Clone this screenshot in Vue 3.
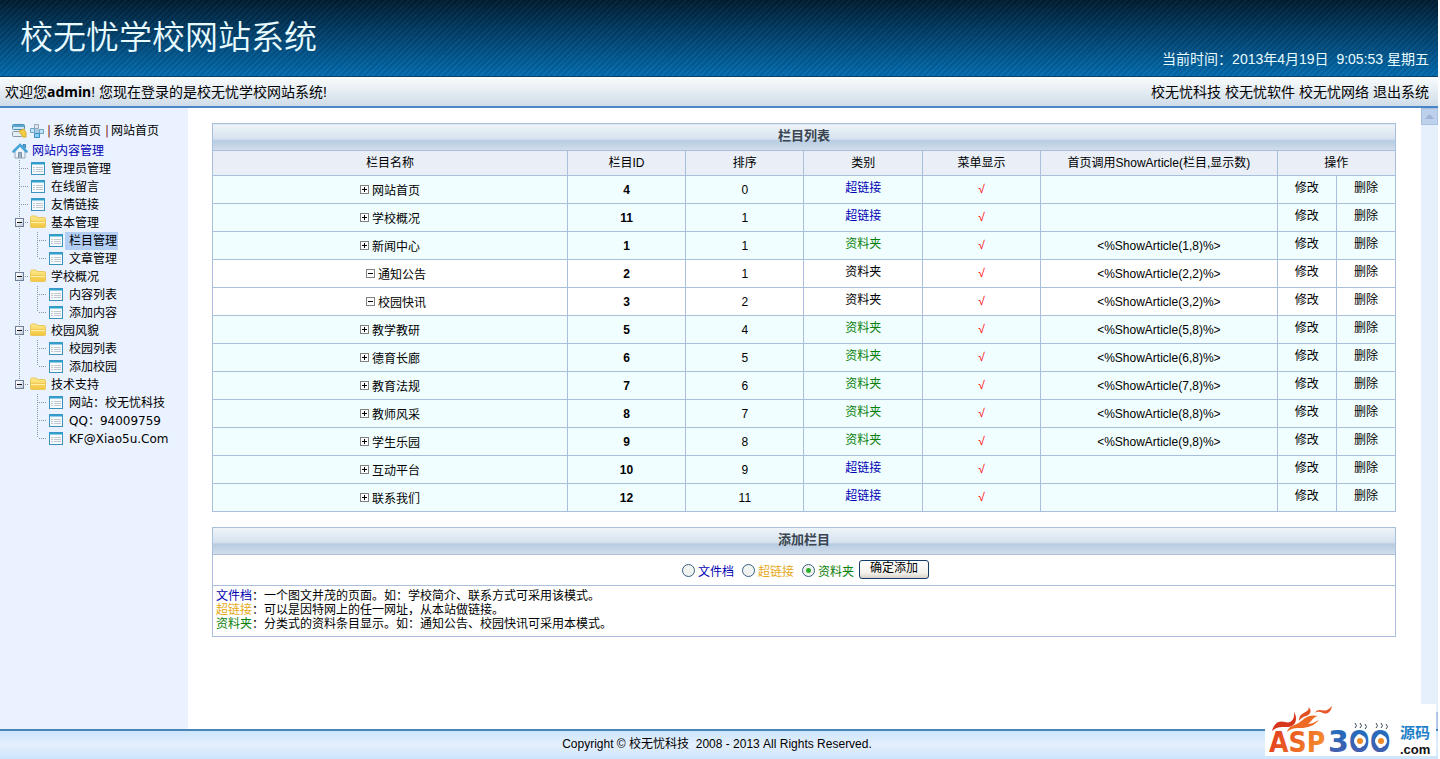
<script setup>
import { ref } from 'vue'

const kind = ref('folder')

const topLinks = ['校无忧科技', '校无忧软件', '校无忧网络', '退出系统']

const tree = [
  { label: '管理员管理' },
  { label: '在线留言' },
  { label: '友情链接' },
  { label: '基本管理', children: ['栏目管理', '文章管理'] },
  { label: '学校概况', children: ['内容列表', '添加内容'] },
  { label: '校园风貌', children: ['校园列表', '添加校园'] },
  { label: '技术支持', children: ['网站：校无忧科技', 'QQ：94009759', 'KF@Xiao5u.Com'] },
]
const active = '栏目管理'

const headings = ['栏目名称', '栏目ID', '排序', '类别', '菜单显示', '首页调用ShowArticle(栏目,显示数)']

const rows = [
  { name: '网站首页', id: 4, order: 0, type: 'link' },
  { name: '学校概况', id: 11, order: 1, type: 'link' },
  { name: '新闻中心', id: 1, order: 1, type: 'folder', call: '<%ShowArticle(1,8)%>' },
  { name: '通知公告', id: 2, order: 1, type: 'folder', call: '<%ShowArticle(2,2)%>', child: true },
  { name: '校园快讯', id: 3, order: 2, type: 'folder', call: '<%ShowArticle(3,2)%>', child: true },
  { name: '教学教研', id: 5, order: 4, type: 'folder', call: '<%ShowArticle(5,8)%>' },
  { name: '德育长廊', id: 6, order: 5, type: 'folder', call: '<%ShowArticle(6,8)%>' },
  { name: '教育法规', id: 7, order: 6, type: 'folder', call: '<%ShowArticle(7,8)%>' },
  { name: '教师风采', id: 8, order: 7, type: 'folder', call: '<%ShowArticle(8,8)%>' },
  { name: '学生乐园', id: 9, order: 8, type: 'folder', call: '<%ShowArticle(9,8)%>' },
  { name: '互动平台', id: 10, order: 9, type: 'link' },
  { name: '联系我们', id: 12, order: 11, type: 'link' },
]

const kinds = [
  { value: 'doc', label: '文件档', help: '一个图文并茂的页面。如：学校简介、联系方式可采用该模式。' },
  { value: 'link', label: '超链接', help: '可以是因特网上的任一网址，从本站做链接。' },
  { value: 'folder', label: '资料夹', help: '分类式的资料条目显示。如：通知公告、校园快讯可采用本模式。' },
]
</script>

<template>
  <div class="page">
    <svg class="defs" width="0" height="0" aria-hidden="true">
      <defs>
        <linearGradient id="folderFill" x1="0" y1="0" x2="0" y2="1">
          <stop offset="0" stop-color="#fdeb8e" />
          <stop offset="1" stop-color="#f3c43c" />
        </linearGradient>
        <linearGradient id="boxFill" x1="0" y1="0" x2="1" y2="1">
          <stop offset="0.2" stop-color="#ffffff" />
          <stop offset="1" stop-color="#b9c3d6" />
        </linearGradient>
        <linearGradient id="fire" x1="0" y1="0" x2="1" y2="0.3">
          <stop offset="0" stop-color="#e0351c" />
          <stop offset="1" stop-color="#f58a2c" />
        </linearGradient>
        <linearGradient id="deep" x1="0" y1="0" x2="0" y2="1">
          <stop offset="0" stop-color="#1c6fc0" />
          <stop offset="1" stop-color="#4a5cab" />
        </linearGradient>
      </defs>
      <symbol id="doc" viewBox="0 0 18 18">
        <rect x="2.5" y="2.5" width="13" height="12" fill="#f6fbff" stroke="#3c92bd" />
        <path d="M2 3.5h14" stroke="#2f9fd0" stroke-width="2" />
        <path d="M4 7.5h2M7 7.5h7M4 9.5h2M7 9.5h7M4 11.5h2M7 11.5h7" stroke="#c3c7d0" />
      </symbol>
      <symbol id="folder" viewBox="0 0 18 18">
        <path d="M1.500 3.500q0-1.500 1.500-1.500h4l1 1.500h7q1.500 0 1.500 1.500v7.500q0 1-1 1H2.500q-1 0-1-1z" fill="url(#folderFill)" stroke="#eac75e" />
        <path d="M2 7.500h14" stroke="#f0c95a" />
        <path d="M2 8.500h14" stroke="#fff0a6" />
      </symbol>
    </svg>

    <header class="banner">
      <h1>校无忧学校网站系统</h1>
      <p class="clock">当前时间：2013年4月19日&nbsp; 9:05:53 星期五</p>
    </header>

    <div class="welcome">
      <p>欢迎您<b>admin</b>! 您现在登录的是校无忧学校网站系统!</p>
      <nav class="toplinks">
        <a v-for="t in topLinks" :key="t" href="#">{{ t }}</a>
      </nav>
    </div>

    <div class="body">
      <aside class="side">
        <div class="tools">
          <button type="button" aria-label="折叠">
            <svg width="16" height="16" viewBox="0 0 16 16">
              <rect x="1.500" y="1.500" width="12" height="5" rx="1" fill="#cfe6f5" stroke="#4a90b8" />
              <path d="M2 3h11" stroke="#5aa7cf" stroke-width="2" />
              <rect x="1.500" y="8.500" width="10" height="5" rx="1" fill="#e3eff7" stroke="#8899a8" />
              <path d="M8 8l5-2 2 4v4h-3z" fill="#f3cf45" stroke="#d9a92a" />
            </svg>
          </button>
          <button type="button" aria-label="展开">
            <svg width="16" height="16" viewBox="0 0 16 16">
              <path d="M5.500 1.500h4v4h-4z" fill="#dfe5ec" stroke="#9aa9b8" />
              <path d="M1.500 5.500h4v4h-4zM10.500 6.500h4v4h-4z" fill="#c4e3f5" stroke="#6aa5c8" />
              <path d="M6 6h4v4H6z" fill="#a9c9de" />
              <path d="M5.500 10.500h5v4h-5z" fill="#8fd0f2" stroke="#2f8ec4" />
            </svg>
          </button>
          <span class="bar">|</span><a href="#">系统首页</a>
          <span class="bar">|</span><a href="#">网站首页</a>
        </div>

        <div class="node root">
          <svg width="16" height="16" viewBox="0 0 16 16" aria-hidden="true">
            <path d="M3 8v7h10V8L8 3z" fill="#eef5fa" stroke="#8fa5b5" />
            <path d="M11 1.500h2.500V5L11 3z" fill="#5aa9d6" stroke="#3f86b0" />
            <path d="M1.500 8.500L8 2l6.500 6.500" fill="none" stroke="#46a4d8" stroke-width="2.500" stroke-linecap="round" />
            <path d="M6.500 15V9.500h3V15" fill="#9db4c4" stroke="#7b93a5" />
          </svg>
          <a href="#">网站内容管理</a>
        </div>

        <ul class="tree">
          <li v-for="(n, i) in tree" :key="n.label">
            <div class="node">
              <svg width="18" height="18" aria-hidden="true">
                <path :d="i === tree.length - 1 ? 'M8.5 0v8' : 'M8.5 0v18'" class="dots" />
                <path d="M10 8.500h8" class="dots" />
                <g v-if="n.children">
                  <rect x="4.500" y="4.500" width="8" height="8" fill="url(#boxFill)" stroke="#6f7f98" />
                  <path d="M6 8.500h5" stroke="#111" />
                </g>
              </svg>
              <svg width="18" height="18" aria-hidden="true"><use :href="n.children ? '#folder' : '#doc'" /></svg>
              <a href="#">{{ n.label }}</a>
            </div>
            <ul v-if="n.children">
              <li v-for="(c, j) in n.children" :key="c">
                <div class="node">
                  <svg width="18" height="18" aria-hidden="true">
                    <path v-if="i < tree.length - 1" d="M8.500 0v18" class="dots" />
                  </svg>
                  <svg width="18" height="18" aria-hidden="true">
                    <path :d="j === n.children.length - 1 ? 'M8.5 0v8' : 'M8.5 0v18'" class="dots" />
                    <path d="M10 8.500h8" class="dots" />
                  </svg>
                  <svg width="18" height="18" aria-hidden="true"><use href="#doc" /></svg>
                  <a href="#" :class="{ active: c === active }">{{ c }}</a>
                </div>
              </li>
            </ul>
          </li>
        </ul>
      </aside>

      <main class="main">
        <table class="grid">
          <colgroup>
            <col class="c30" /><col class="c10" /><col class="c10" /><col class="c10" /><col class="c10" />
            <col class="c20" /><col class="c5" /><col class="c5" />
          </colgroup>
          <thead>
            <tr class="title"><th colspan="8">栏目列表</th></tr>
            <tr class="heads">
              <th v-for="h in headings" :key="h">{{ h }}</th>
              <th colspan="2">操作</th>
            </tr>
          </thead>
          <tbody>
            <tr v-for="r in rows" :key="r.id" :class="{ child: r.child }">
              <td class="name">
                <div>
                  <svg width="9" height="9" viewBox="0 0 9 9" aria-hidden="true">
                    <rect x="0.500" y="0.500" width="8" height="8" fill="#fff" stroke="#808080" />
                    <path :d="r.child ? 'M2 4.5h5' : 'M2 4.5h5M4.5 2v5'" stroke="#000" />
                  </svg>
                  <span>{{ r.name }}</span>
                </div>
              </td>
              <td><b>{{ r.id }}</b></td>
              <td>{{ r.order }}</td>
              <td class="up" :class="r.child ? '' : r.type">{{ r.type === 'link' ? '超链接' : '资料夹' }}</td>
              <td class="tick">√</td>
              <td>{{ r.call }}</td>
              <td class="up"><a href="#">修改</a></td>
              <td class="up"><a href="#">删除</a></td>
            </tr>
          </tbody>
        </table>

        <section class="add">
          <h2>添加栏目</h2>
          <form @submit.prevent>
            <label v-for="k in kinds" :key="k.value" :class="'k-' + k.value">
              <input v-model="kind" type="radio" name="kind" :value="k.value" /><span>{{ k.label }}</span>
            </label>
            <button type="submit">确定添加</button>
          </form>
          <div class="help">
            <p v-for="k in kinds" :key="k.value"><span :class="'k-' + k.value">{{ k.label }}</span>：{{ k.help }}</p>
          </div>
        </section>
      </main>

      <div class="scroll" aria-hidden="true">
        <span class="arrow"><svg width="9" height="5"><path d="M0 5L4.500 0 9 5z" fill="#9db4d6" /></svg></span>
        <span class="arrow"><svg width="9" height="5"><path d="M0 0h9L4.500 5z" fill="#9db4d6" /></svg></span>
      </div>
    </div>

    <footer class="foot">Copyright © 校无忧科技&nbsp; 2008 - 2013 All Rights Reserved.</footer>

    <a class="mark" href="#" aria-label="ASP300源码.com">
      <svg width="171" height="52" viewBox="0 0 171 52">
        <path d="M7 27C9 19 14 16 20 18C26 20 30 15 29 8C33 14 31 22 24 23C17 23 12 22 7 27z" fill="#d8361c" />
        <path d="M22 28C24 21 30 22 35 18C40 14 44 10 53 12C48 13 47 17 43 20C48 20 51 17 54 16C49 22 42 24 36 24C31 24 26 24 22 28z" fill="#ee6a22" />
        <path d="M34 17C34 10 38 10 42 7C44 6 44 4 43 3C48 6 45 11 41 12C38 13 36 14 34 17z" fill="#e2501f" />
        <path d="M50 9C53 3 58 8 62 6C64 5 65 4 67 2C66 8 62 11 58 9C55 8 53 7 50 9z" fill="#e8552a" />
        <text x="4" y="48" class="asp">ASP</text>
        <text x="63" y="48" class="num">300</text>
        <text x="135" y="34" class="zh">源码</text>
        <text x="135" y="50" class="com">.com</text>
        <g fill="#fff"><circle cx="95" cy="37" r="6" /><circle cx="116" cy="37" r="6" /></g>
        <g fill="#f08a24"><circle cx="95" cy="37" r="3" /><circle cx="116" cy="37" r="3" /></g>
        <path d="M90 24q3-2 0-5M95 24q3-2 0-5M100 25q3-2 0-5M111 24q3-2 0-5M116 24q3-2 0-5M121 25q3-2 0-5" fill="none" stroke="#345" />
      </svg>
    </a>
  </div>
</template>

<style>
body {
  margin: 0;
  background: #fff;
}
</style>

<style scoped>
.page {
  position: relative;
  display: flex;
  flex-direction: column;
  min-height: 100vh;
  padding-right: 2px;
  box-sizing: border-box;
  font: 12px/16px "Liberation Sans", "Noto Sans CJK SC", sans-serif;
  color: #000;
}
.defs { position: absolute; }
h1, h2, p, ul { margin: 0; padding: 0; font-weight: normal; }
ul { list-style: none; }
a { color: inherit; text-decoration: none; }
svg { flex: none; }

.banner {
  display: flex;
  justify-content: space-between;
  align-items: flex-end;
  height: 76px;
  padding: 0 9px 0 20px;
  border-bottom: 1px solid #0b3f66;
  background:
    repeating-linear-gradient(135deg, rgba(255, 255, 255, 0.03) 0 2px, rgba(0, 0, 0, 0.06) 2px 4px),
    linear-gradient(#001c30, #01406b 45%, #026bae);
  color: #e8fbff;
}
h1 {
  font-size: 33px;
  font-weight: 350;
  line-height: 40px;
  padding-bottom: 18px;
}
.clock { font-size: 14px; line-height: 20px; padding-bottom: 7px; }

.welcome {
  display: flex;
  justify-content: space-between;
  align-items: center;
  height: 29px;
  padding: 0 9px 0 5px;
  border-bottom: 2px solid #4a86c5;
  background: linear-gradient(#fafcfd, #cfdce8);
  font-size: 14px;
}
.welcome b { font-family: "Noto Sans", sans-serif; }
.toplinks { display: flex; gap: 4px; }

.body { display: flex; flex: 1; }
.side {
  width: 188px;
  flex: none;
  box-sizing: border-box;
  padding: 13px 0 0 11px;
  background: #ebf2ff;
  font-family: "DejaVu Sans", "Noto Sans CJK SC", sans-serif;
}
.tools { display: flex; align-items: center; height: 19px; }
.tools button {
  display: flex;
  padding: 0;
  margin-right: 2px;
  border: 0;
  background: none;
}
.tools a { padding: 0 4px 0 2px; }
.bar { width: 4px; color: #802020; }
.node { display: flex; align-items: center; height: 18px; line-height: 18px; white-space: nowrap; }
.node a { padding: 0 1px 0 4px; }
.root { height: 18px; padding-top: 2px; color: #0000b4; }
.root svg { margin-left: 1px; }
.dots { stroke: #8a94a8; stroke-dasharray: 1 1; fill: none; }
.active { background: #b4cff5; }

.main { flex: 1; padding: 15px 25px 20px 24px; }
.grid {
  width: 100%;
  border-collapse: collapse;
  table-layout: fixed;
}
.c30 { width: 30%; }
.c20 { width: 20%; }
.c10 { width: 10%; }
.c5 { width: 5%; }
th, td {
  border: 1px solid #a9bfdc;
  padding: 0;
  text-align: center;
  font-weight: normal;
}
.title th, h2 {
  height: 26px;
  font-size: 13px;
  font-weight: bold;
  line-height: 24px;
  text-align: center;
  vertical-align: top;
  color: #3a4450;
  background: linear-gradient(#eef4f9, #d6e3ef 55%, #b6cbe1 62%, #d3deec);
}
.heads th { height: 24px; background: #e9eef7; }
tbody td { height: 27px; background: #f0feff; }
tbody .child td { background: #fff; }
.name div {
  display: flex;
  align-items: center;
  justify-content: center;
  gap: 3px;
}
.name span { padding-top: 2px; }
.child .name { padding-left: 12px; }
.up { padding-bottom: 3px; height: 24px; }
.link { color: #0000b4; }
.folder { color: #0a800a; }
.tick { color: #f00; padding-bottom: 2px; height: 25px; }

.add { margin-top: 15px; border: 1px solid #a9bfdc; }
form {
  display: flex;
  justify-content: center;
  align-items: center;
  height: 30px;
  padding-left: 3px;
  border: solid #a9bfdc;
  border-width: 1px 0;
}
label { display: flex; align-items: center; margin-right: 8px; }
label span { padding-top: 3px; }
label:last-of-type { margin-right: 5px; }
input {
  appearance: none;
  box-sizing: border-box;
  width: 13px;
  height: 13px;
  margin: 0 3px 0 0;
  border: 1px solid #3a5f85;
  border-radius: 50%;
  background: #f1f3f1;
}
input:checked { background: radial-gradient(circle, #2eae2e 0 2px, #f1f3f1 3px); }
form button {
  width: 70px;
  height: 19px;
  margin-bottom: 2px;
  padding: 0 0 2px;
  border: 1px solid #123c66;
  border-radius: 3px;
  background: linear-gradient(#fff, #f2f1ec 70%, #d8d2c6);
  font: inherit;
  line-height: 15px;
}
.k-doc { color: #0000b4; }
.k-link { color: #e6a817; }
.k-folder { color: #0a800a; }
.help { padding: 3px 3px 5px; line-height: 14px; }

.scroll {
  display: flex;
  flex-direction: column;
  justify-content: space-between;
  width: 17px;
  background: #e6f0fd;
}
.arrow {
  display: flex;
  align-items: center;
  justify-content: center;
  height: 17px;
  background: #bdd1ec;
  box-shadow: inset 0 0 0 1px #a9c0e0;
}

.foot {
  height: 28px;
  padding-right: 4px;
  border-top: 2px solid #4a86b5;
  background: linear-gradient(#cde5fd, #e4effd 50%, #cde5fd);
  line-height: 26px;
  text-align: center;
}

.mark {
  position: absolute;
  right: 4px;
  bottom: 3px;
  display: flex;
  background: #fff;
}
.mark svg { overflow: visible; }
.mark text { font-family: "DejaVu Sans", "Noto Sans CJK SC", sans-serif; font-weight: bold; }
.mark .asp { font-family: "DejaVu Sans Condensed", "DejaVu Sans", sans-serif; font-size: 28px; fill: url(#fire); }
.mark .num { font-size: 30px; fill: url(#deep); }
.mark .zh { font-size: 15px; fill: #1e7fc8; }
.mark .com { font-family: "Liberation Sans", sans-serif; font-size: 13px; fill: #111; }
</style>
